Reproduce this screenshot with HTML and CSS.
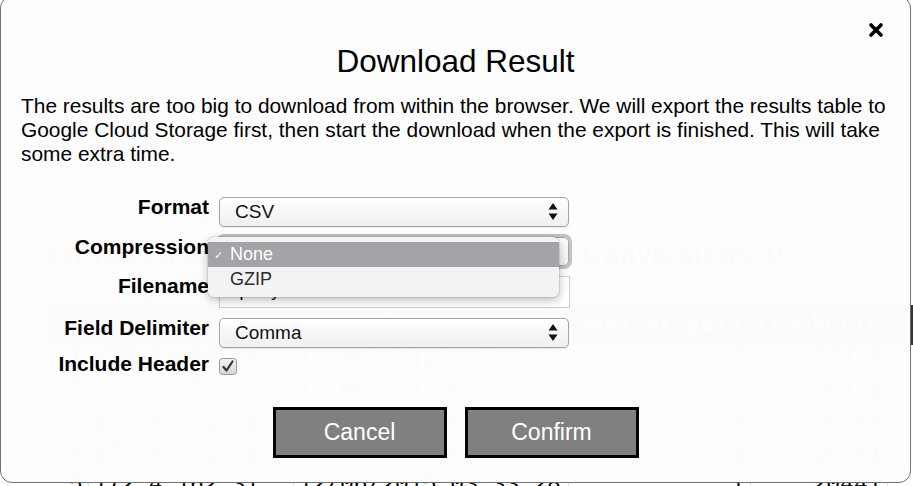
FILE: index.html
```html
<!DOCTYPE html>
<html lang="en">
<head>
<meta charset="utf-8">
<title>Download Result</title>
<link rel="stylesheet" href="styles.css">
</head>
<body>
<div class="page">
  <h1 class="bg-title">format-cascade-2015-12:webofscrolling.Conversions_0</h1>
  <div class="bg-meta">
    <span class="bg-first">First &lt;</span>
    <span class="bg-rows">17 rows in 0 seconds</span>
  </div>
  <table class="bg-table">
    <colgroup>
      <col class="c-num"><col class="c-ip"><col class="c-ts"><col class="c-dev"><col class="c-trk"><col class="c-more">
    </colgroup>
    <thead>
      <tr><th></th><th>ip</th><th>Timestamp</th><th>devicetypeid</th><th>trackerid</th><th>C</th></tr>
    </thead>
    <tbody>
      <tr><td class="num">1</td><td>172.4.162.31</td><td>12/06/2015 03:33:28</td><td class="num">1</td><td class="num">20441</td><td></td></tr>
      <tr><td class="num">2</td><td>172.4.162.31</td><td>12/06/2015 03:33:28</td><td class="num">1</td><td class="num">20441</td><td></td></tr>
      <tr><td class="num">3</td><td>172.4.162.31</td><td>12/06/2015 03:33:28</td><td class="num">1</td><td class="num">20441</td><td></td></tr>
      <tr><td class="num">4</td><td>172.4.162.31</td><td>12/06/2015 03:33:28</td><td class="num">1</td><td class="num">20441</td><td></td></tr>
      <tr><td class="num">5</td><td>172.4.162.31</td><td>12/06/2015 03:33:28</td><td class="num">1</td><td class="num">20441</td><td></td></tr>
    </tbody>
  </table>
</div>

<div class="modal">
  <button class="close" type="button" aria-label="Close">
    <svg width="16" height="16" viewBox="0 0 16 16"><path d="M3 3 L13 13 M13 3 L3 13" stroke="#000" stroke-width="3.6" stroke-linecap="round"/></svg>
  </button>
  <h2 class="title">Download Result</h2>
  <p class="desc">The results are too big to download from within the browser. We will export the results table to Google Cloud Storage first, then start the download when the export is finished. This will take some extra time.</p>

  <div class="form">
    <div class="label">Format</div>
    <div class="select"><span>CSV</span><svg class="arrows" width="10" height="17" viewBox="0 0 10 17"><path d="M5 0 L9.5 6.5 L0.5 6.5 Z M5 17 L9.5 10.5 L0.5 10.5 Z" fill="#111"/></svg></div>

    <div class="label">Compression</div>
    <div class="cell">
      <div class="select focused"><span>None</span><svg class="arrows" width="10" height="17" viewBox="0 0 10 17"><path d="M5 0 L9.5 6.5 L0.5 6.5 Z M5 17 L9.5 10.5 L0.5 10.5 Z" fill="#111"/></svg></div>
      <div class="menu">
        <div class="opt selected"><span class="tick">✓</span>None</div>
        <div class="opt">GZIP</div>
      </div>
    </div>

    <div class="label">Filename</div>
    <div class="input">query-results.csv</div>

    <div class="label">Field Delimiter</div>
    <div class="select"><span>Comma</span><svg class="arrows" width="10" height="17" viewBox="0 0 10 17"><path d="M5 0 L9.5 6.5 L0.5 6.5 Z M5 17 L9.5 10.5 L0.5 10.5 Z" fill="#111"/></svg></div>

    <div class="label label-check">Include Header</div>
    <div class="check">
      <svg width="19" height="17" viewBox="0 0 19 17">
        <defs><linearGradient id="cb" x1="0" y1="0" x2="0" y2="1"><stop offset="0" stop-color="#f4f4f4"/><stop offset="1" stop-color="#d4d4d4"/></linearGradient></defs>
        <rect x="0.5" y="0.5" width="17" height="16" rx="3" fill="url(#cb)" stroke="#9a9a9a"/>
        <path d="M4.5 9 L7.5 12.5 L13.5 3.5" fill="none" stroke="#333" stroke-width="2.2" stroke-linecap="round" stroke-linejoin="round"/>
      </svg>
    </div>
  </div>

  <div class="actions">
    <button class="btn" type="button">Cancel</button>
    <button class="btn" type="button">Confirm</button>
  </div>
</div>
</body>
</html>
```
FILE: styles.css
```css
html, body {
  margin: 0;
  padding: 0;
  background: #ffffff;
  overflow: hidden;
  width: 913px;
  height: 486px;
}

/* background page (behind modal) */
.page {
  width: 913px;
  height: 486px;
  box-sizing: border-box;
  overflow: hidden;
  padding: 238px 0 0 48px;
  font-family: "Liberation Sans", Arial, sans-serif;
  color: #000;
}
.bg-title {
  margin: 0;
  font-size: 28px;
  line-height: 34px;
  font-weight: bold;
  white-space: nowrap;
}
.bg-meta {
  display: flex;
  height: 33px;
  align-items: center;
  font-size: 21px;
  color: #999;
}
.bg-first { width: 545px; }
.bg-rows { font-style: italic; }
.bg-table {
  border-collapse: collapse;
  table-layout: fixed;
  width: 960px;
  font-family: "Liberation Mono", "Courier New", monospace;
  font-size: 23px;
}
.c-num { width: 40px; }
.c-ip { width: 205px; }
.c-ts { width: 275px; }
.c-dev { width: 182px; }
.c-trk { width: 137px; }
.c-more { width: 121px; }
.bg-table th {
  height: 40px;
  padding: 0 4px;
  background: #333;
  color: #fff;
  font-weight: bold;
  white-space: nowrap;
  overflow: hidden;
  border-right: 1px solid #555;
}
.bg-table td {
  height: 31px;
  padding: 0 5px;
  white-space: nowrap;
  overflow: hidden;
  border-right: 1px solid #ddd;
}
.bg-table td.num { text-align: right; }

/* modal */
.modal {
  position: absolute;
  left: 0;
  top: -4px;
  width: 911px;
  height: 487px;
  box-sizing: border-box;
  border: 1px solid #707070;
  border-radius: 12px;
  background: rgba(253, 253, 253, 0.992);
  padding: 0 20px;
  font-family: "Liberation Sans", Arial, sans-serif;
  color: #000;
}
.close {
  position: absolute;
  top: 25px;
  right: 26px;
  width: 16px;
  height: 16px;
  padding: 0;
  border: 0;
  background: none;
  line-height: 0;
}
.title {
  margin: 46px 0 0;
  font-size: 31.5px;
  line-height: 36px;
  font-weight: normal;
  text-align: center;
}
.desc {
  margin: 15px 0 0;
  font-size: 20.9px;
  line-height: 24px;
}

.form {
  margin-top: 31px;
  display: grid;
  grid-template-columns: 188px 350px;
  column-gap: 10px;
  row-gap: 10px;
  align-items: start;
}
.label {
  font-size: 21px;
  line-height: 20px;
  font-weight: bold;
  text-align: right;
  white-space: nowrap;
}
.label-check { margin-top: -4px; }
.cell { position: relative; }

.select {
  position: relative;
  height: 30px;
  box-sizing: border-box;
  border: 1px solid #a4a4a4;
  border-radius: 5px;
  background: linear-gradient(#ffffff, #f0f0f0);
  box-shadow: 0 1px 1px rgba(0,0,0,0.08);
  padding-left: 15px;
  font-size: 19px;
  line-height: 28px;
  color: #111;
}
.select .arrows {
  position: absolute;
  right: 10px;
  top: 5px;
}
.select.focused {
  height: 29px;
  box-shadow: 0 0 0 3px rgba(140, 150, 160, 0.55);
}
.input {
  height: 32px;
  box-sizing: border-box;
  border: 1px solid #cfcfcf;
  background: #fff;
  padding-left: 13px;
  font-size: 19px;
  line-height: 26px;
  color: #111;
  width: 351px;
}
.menu {
  position: absolute;
  left: -11px;
  top: 0;
  width: 351px;
  box-sizing: border-box;
  padding: 5px 0;
  background: #f3f3f3;
  border-radius: 6px;
  box-shadow: 0 3px 10px rgba(0,0,0,0.28), 0 0 0 1px rgba(0,0,0,0.08);
  font-size: 18px;
  color: #2a2a2a;
  z-index: 2;
}
.opt {
  position: relative;
  height: 25px;
  line-height: 25px;
  padding-left: 22px;
}
.opt.selected {
  background: #a3a3a8;
  color: #fff;
}
.tick {
  position: absolute;
  left: 6px;
  top: 1px;
  font-family: "DejaVu Sans", sans-serif;
  font-size: 11px;
}
.check {
  height: 16px;
  line-height: 0;
}

.actions {
  margin-top: 33px;
  display: flex;
  justify-content: center;
  gap: 18px;
}
.btn {
  width: 174px;
  height: 51px;
  box-sizing: border-box;
  border: 3px solid #000;
  background: #808080;
  color: #fff;
  font-family: "Liberation Sans", Arial, sans-serif;
  font-size: 23px;
  padding: 0;
}
```
